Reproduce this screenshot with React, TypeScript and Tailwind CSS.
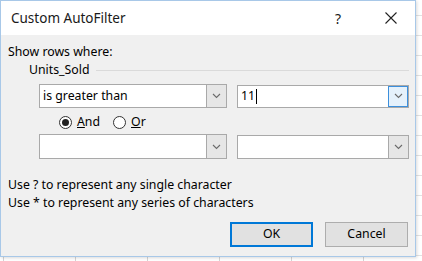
import React from "react";

const Chevron = () => (
  <svg width="9" height="6" viewBox="0 0 9 6" fill="none">
    <path d="M1 1 L4.5 4.5 L8 1" stroke="#6b6b6b" strokeWidth="1.1" />
  </svg>
);

function Combo({ width, height, text, active, caret }: { width: number; height: number; text?: string; active?: boolean; caret?: boolean }) {
  return (
    <div
      className="flex border border-[#a9a9a9] bg-white"
      style={{ width, height }}
    >
      <div className="flex flex-1 items-center pl-[3px] text-[12.3px] text-black">
        {text}
        {caret && <span className="ml-[1px] inline-block h-[15px] w-px bg-black" />}
      </div>
      <div
        className={
          active
            ? "flex w-[20px] items-center justify-center border border-[#3c8fdc] bg-[#e5f1fb]"
            : "flex w-[20px] items-center justify-center border-l border-[#a9a9a9] bg-[#e6e6e6]"
        }
      >
        <Chevron />
      </div>
    </div>
  );
}

export default function App() {
  return (
    <div
      className="relative h-[261px] w-[422px] overflow-hidden bg-white"
      style={{ fontFamily: '"Noto Sans", "Open Sans", sans-serif' }}
    >
      <div className="absolute inset-0 bg-[linear-gradient(to_right,#d4d4d4_1px,transparent_1px),linear-gradient(to_bottom,#e2e2e2_1px,transparent_1px)] bg-[size:72px_20px] bg-[position:3px_15px]" />
      <div className="absolute left-0 top-0 flex h-[257px] w-[416px] flex-col border border-[#a8c8e8] bg-[#f0f0f0] shadow-[1px_1px_3px_rgba(0,0,0,0.15)]">
        <div className="flex h-[34px] items-center bg-white pl-[10px] text-[13.5px] text-[#1a1a1a]">
          <span className="flex-1">Custom AutoFilter</span>
          <span className="mr-[44px] text-[14px]">?</span>
          <svg className="mr-[18px]" width="12" height="12" viewBox="0 0 12 12">
            <path d="M0.5 0.5 L11.5 11.5 M11.5 0.5 L0.5 11.5" stroke="#222" strokeWidth="1.1" />
          </svg>
        </div>
        <div className="flex flex-col pl-[7px] text-[12.3px] text-black">
          <div className="mt-[9px] leading-[16px]">Show rows where:</div>
          <div className="mt-[2px] flex items-center pl-[21px] leading-[16px]">
            <span>Units_Sold</span>
            <span className="ml-[7px] mr-[6px] h-px flex-1 bg-[#dadada]" />
          </div>
          <div className="mt-[6px] flex items-center gap-[10px] pl-[31px]">
            <Combo width={188} height={24} text="is greater than" />
            <Combo width={172} height={23} text="11" active caret />
          </div>
          <div className="mt-[4px] flex h-[20px] items-center pl-[51px]">
            <span className="flex h-[13px] w-[13px] items-center justify-center rounded-full border border-[#333] bg-white">
              <span className="h-[7px] w-[7px] rounded-full bg-[#222]" />
            </span>
            <span className="ml-[5px]"><span className="underline">A</span>nd</span>
            <span className="ml-[13px] flex h-[13px] w-[13px] rounded-full border border-[#333] bg-white" />
            <span className="ml-[5px]"><span className="underline">O</span>r</span>
          </div>
          <div className="mt-[2px] flex items-center gap-[10px] pl-[31px]">
            <Combo width={188} height={25} />
            <Combo width={172} height={24} />
          </div>
          <div className="mt-[17px] leading-[18px]">Use ? to represent any single character</div>
          <div className="leading-[18px]">Use * to represent any series of characters</div>
          <div className="mt-[10px] flex justify-end gap-[12px] pr-[7px]">
            <div className="flex h-[25px] w-[83px] items-center justify-center border-2 border-[#0078d7] bg-[#e1e1e1]">OK</div>
            <div className="flex h-[25px] w-[83px] items-center justify-center border border-[#adadad] bg-[#e1e1e1]">Cancel</div>
          </div>
        </div>
      </div>
    </div>
  );
}
